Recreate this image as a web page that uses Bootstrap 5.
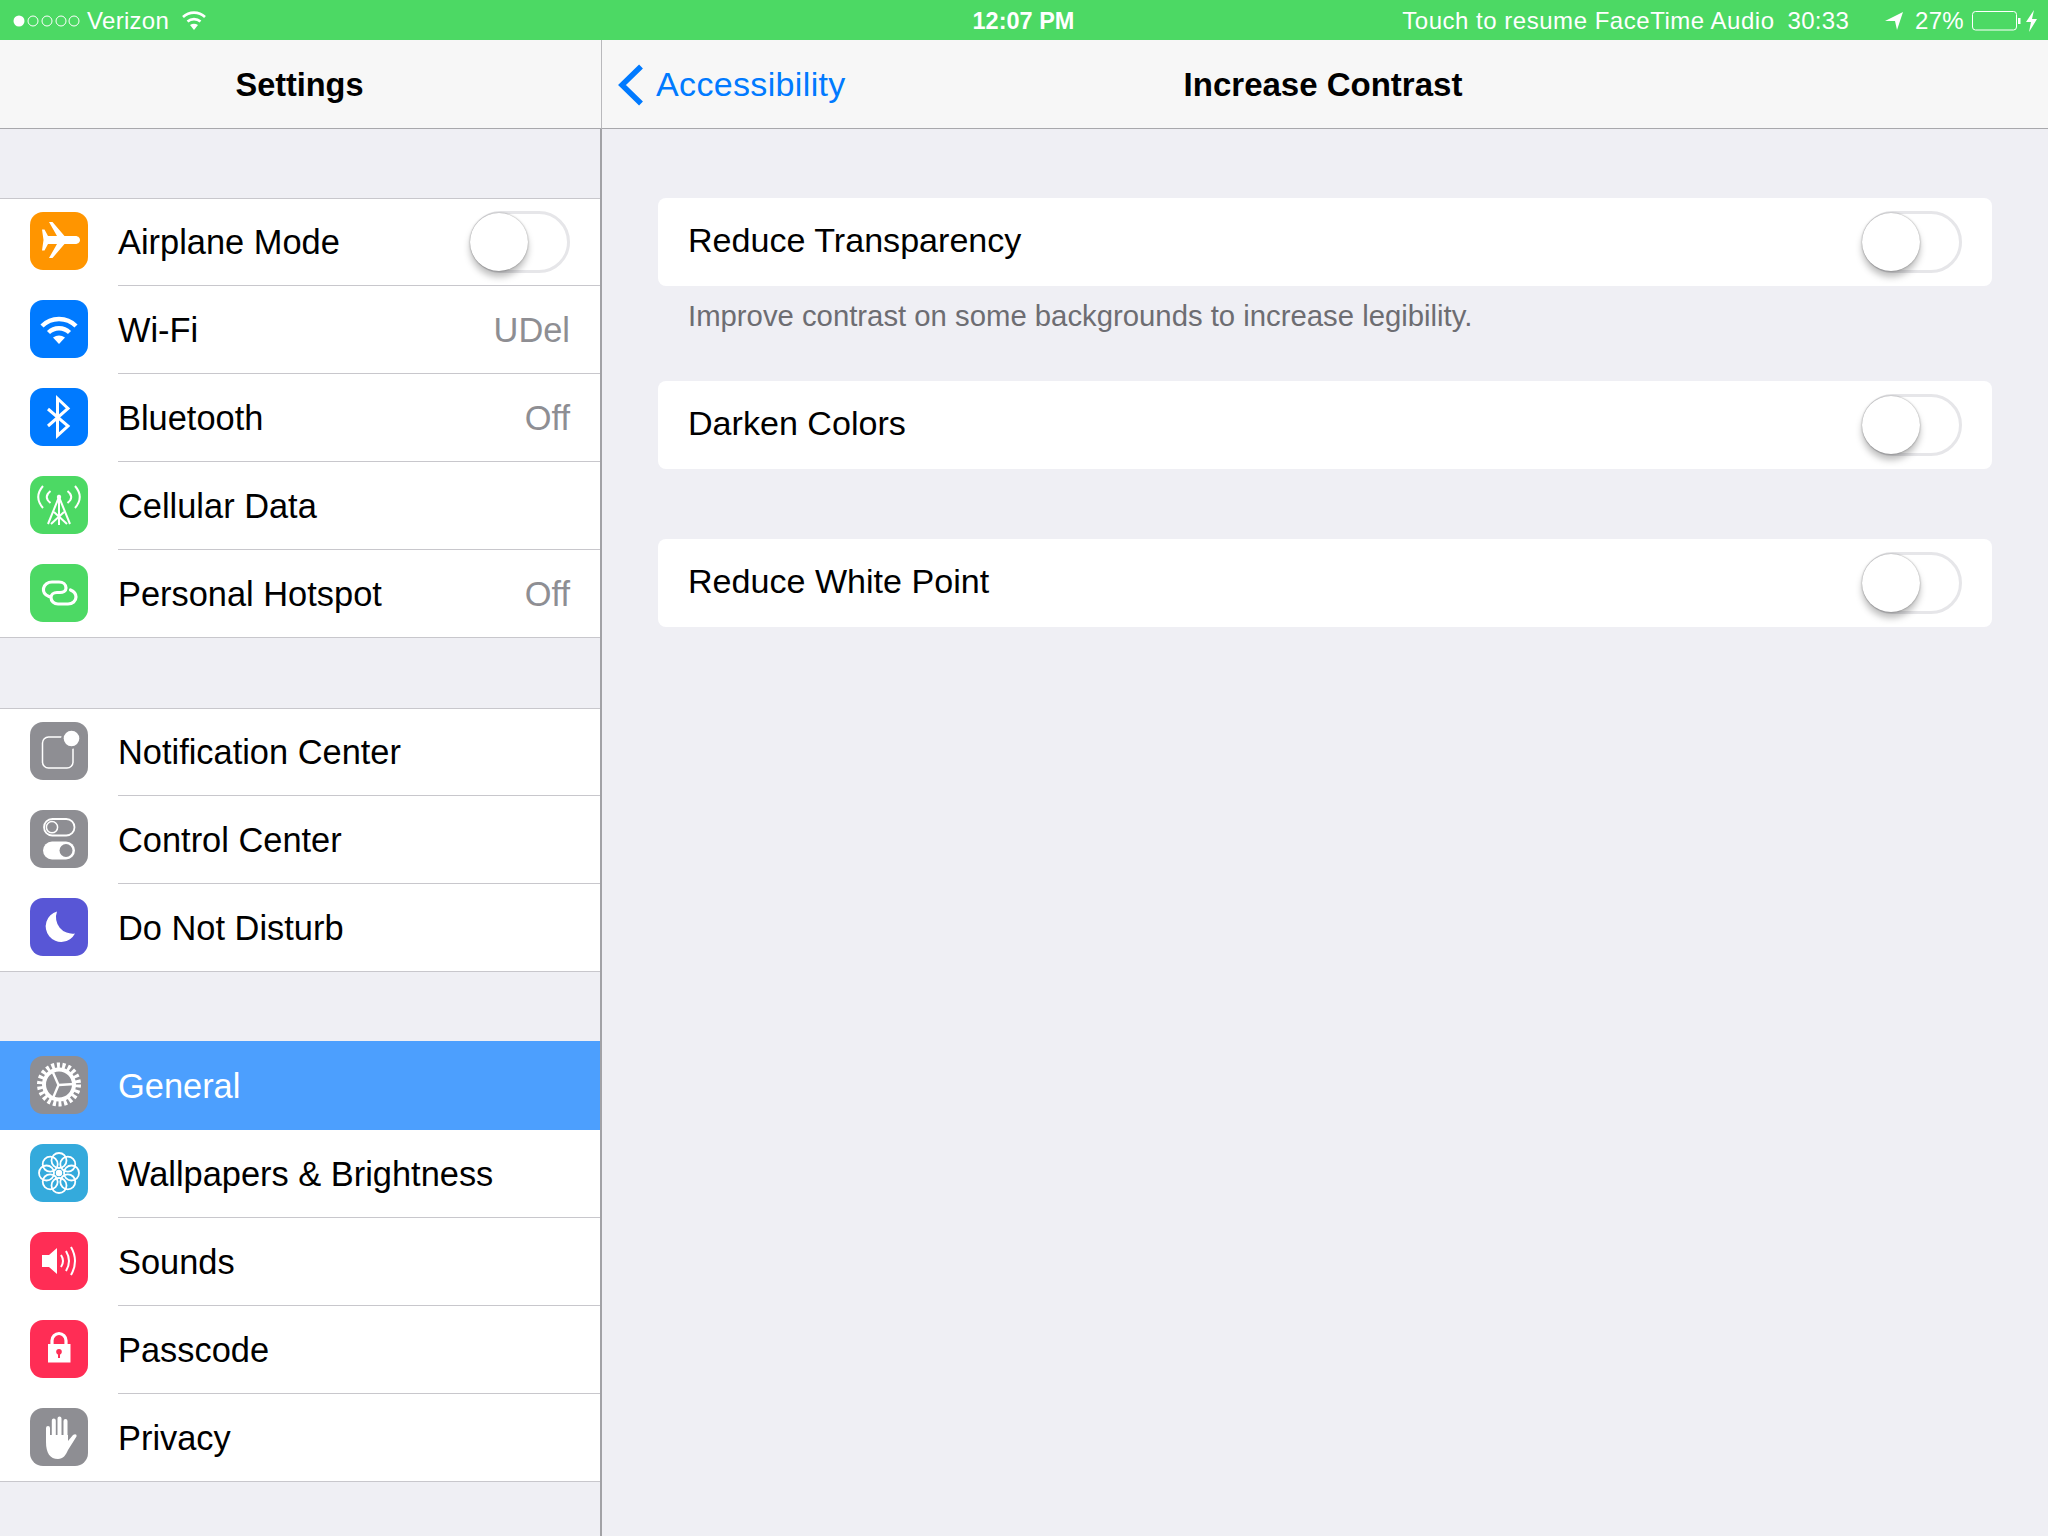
<!DOCTYPE html>
<html lang="en">
<head>
<meta charset="utf-8">
<title>Increase Contrast</title>
<link href="https://cdn.jsdelivr.net/npm/bootstrap@5.3.0/dist/css/bootstrap.min.css" rel="stylesheet">
<style>
html,body{height:1536px;overflow:hidden}
body{background:#efeff4;font-family:"Liberation Sans",Arial,sans-serif;color:#000;--bs-body-font-family:"Liberation Sans",Arial,sans-serif}
.stat-bar{height:40px;background:#4cd964;color:#fff;font-size:24px;display:grid;grid-template-columns:1fr auto 1fr;align-items:center;line-height:40px;letter-spacing:.3px;padding:1px 11px 0 13px}
.stat-time{font-weight:700;font-size:23.5px;letter-spacing:0;margin-left:-3px}
.sig-dots{width:67px;height:12px;margin-right:7px}
.carrier{margin-right:12px}
.stat-wifi{width:26px;height:20px;margin-top:-2px}
.stat-arrow{width:20px;height:20px;margin:0 11px 0 35px}
.stat-batt{width:49px;height:20px;margin-left:8px}
.stat-bolt{width:11px;height:22px;margin-left:5px}
.resume-msg{letter-spacing:.52px}
.timer{margin-left:13px}
.page-split{height:1496px}
.side-pane{width:602px;flex:none;border-right:2px solid #a2a2a6}
.main-pane{flex:1 1 auto;min-width:0}
.top-nav{height:89px;background:#f7f7f7;border-bottom:1px solid #a8a8ac;font-size:34px;line-height:89px;flex:none}
.side-pane .top-nav{margin-right:-2px;border-right:1px solid #b9b9bc;text-align:center;font-weight:700;font-size:32.5px;letter-spacing:-.05px;padding-right:2px;line-height:90px}
.main-nav{display:grid;grid-template-columns:1fr auto 1fr;padding-right:4px}
.nav-head{font-weight:700;font-size:33px}
.back-link{color:#007aff;text-decoration:none;font-size:34px;letter-spacing:.35px;padding-left:15px;display:flex;align-items:center}
.back-chev{width:27px;height:42px;margin-right:12px}
.set-list{border-radius:0;margin-top:69px;border-top:1px solid #c8c7cc;border-bottom:1px solid #c8c7cc;background:#fff;--bs-list-group-bg:#fff;--bs-list-group-border-width:0;--bs-list-group-item-padding-x:0;--bs-list-group-item-padding-y:0}
.set-list+.set-list{margin-top:70px}
.set-list.tight{margin-top:69px;border-top:0}
.set-item{height:88px;padding:0 0 0 30px;font-size:34.4px;color:#000;display:flex;align-items:center;text-decoration:none;background:#fff}
.set-list>.set-item:first-child{height:87px}
.set-list>.set-item:last-child{height:87px}
.set-list.tight>.set-item:first-child{height:89px}
.set-item.is-current{background:#4c9ffe;color:#fff}
.set-ico{width:58px;height:58px;flex:none;margin-right:30px;margin-top:-2px;display:block}
.set-list:not(.tight)>.set-item:first-child .set-ico{margin-top:-3px}
.set-body{flex:1 1 auto;height:100%;display:flex;align-items:center;justify-content:space-between;padding-right:30px;border-bottom:1px solid #c8c7cc;min-width:0}
.set-item:last-child .set-body,.is-current .set-body{border-bottom:0}
.set-label,.set-val{position:relative;top:1px}
.set-val{color:#8e8e93}
.tgl-track{width:100px;height:62px;border:3px solid #e6e6e9;border-radius:31px;background:#fff;flex:none;position:relative;display:block}
.tgl-knob{position:absolute;left:-3px;top:-1px;width:58px;height:58px;border-radius:50%;background:#fff;box-shadow:0 6px 7px rgba(0,0,0,.26),0 0 2px rgba(0,0,0,.4)}
.set-item .tgl-track{margin-top:-1px}
.opt-wrap{padding:69px 56px 0}
.opt-card{height:88px;background:#fff;border-radius:8px;font-size:34.1px;padding:0 30px;display:flex;align-items:center;justify-content:space-between}
.opt-label{position:relative;top:-1px}
.opt-note{color:#6d6d72;font-size:29.3px;line-height:34px;padding:13px 31px 0 30px;height:95px;margin:0}
.opt-gap{margin-top:70px}
</style>
</head>
<body>
<div class="stat-bar">
  <div class="d-flex align-items-center">
    <svg class="sig-dots" viewBox="0 0 67 12"><circle cx="6" cy="6" r="5.5" fill="#fff"/><g fill="none" stroke="#fff" stroke-width="1"><circle cx="20" cy="6" r="5"/><circle cx="34" cy="6" r="5"/><circle cx="48" cy="6" r="5"/><circle cx="61" cy="6" r="5"/></g></svg>
    <span class="carrier">Verizon</span>
    <svg class="stat-wifi" viewBox="0 0 26 20"><g fill="none" stroke="#fff" stroke-width="2.6"><path d="M2 7A16 16 0 0 1 24 7"/><path d="M6.5 11.5A10 10 0 0 1 19.5 11.5"/></g><path d="M9 15Q13 12.5 17 15L13 20Z" fill="#fff"/></svg>
  </div>
  <div class="stat-time">12:07 PM</div>
  <div class="d-flex align-items-center justify-content-end">
    <span class="resume-msg">Touch to resume FaceTime Audio</span><span class="timer">30:33</span>
    <svg class="stat-arrow" viewBox="0 0 20 20"><path d="M1 10L19 1L13 19L11 10Z" fill="#fff"/></svg>
    <span>27%</span>
    <svg class="stat-batt" viewBox="0 0 49 20"><rect x=".5" y=".5" width="44" height="18.5" rx="3" fill="none" stroke="#fff"/><rect x="46" y="7" width="2.5" height="6" fill="#fff"/></svg>
    <svg class="stat-bolt" viewBox="0 0 11 22"><path d="M8 0L0 12H5L3 22L11 9H6Z" fill="#fff"/></svg>
  </div>
</div>
<div class="d-flex page-split">
  <aside class="side-pane d-flex flex-column">
    <div class="top-nav">Settings</div>
    <div class="list-group list-group-flush set-list">
      <a class="list-group-item set-item" href="#">
        <svg class="set-ico" viewBox="0 0 58 58"><rect width="58" height="58" rx="13" fill="#ff9500"/><path d="M12 17.5H14.5L18 24H27L19 10H22.5L34.5 24H45C49 24 50 26.5 50 28S49 32 45 32H34.5L22.5 46H19L27 32H18L14.5 38.5H12L13.5 28Z" fill="#fff"/></svg>
        <div class="set-body"><span class="set-label">Airplane Mode</span><span class="tgl-track"><span class="tgl-knob"></span></span></div>
      </a>
      <a class="list-group-item set-item" href="#">
        <svg class="set-ico" viewBox="0 0 58 58"><rect width="58" height="58" rx="13" fill="#007aff"/><g fill="none" stroke="#fff" stroke-width="4.4"><path d="M12 26A24 24 0 0 1 46 26"/><path d="M18.5 32.5A15 15 0 0 1 39.5 32.5"/></g><path d="M23 37.5Q29 33.5 35 37.5L29 44Z" fill="#fff"/></svg>
        <div class="set-body"><span class="set-label">Wi-Fi</span><span class="set-val">UDel</span></div>
      </a>
      <a class="list-group-item set-item" href="#">
        <svg class="set-ico" viewBox="0 0 58 58"><rect width="58" height="58" rx="13" fill="#007aff"/><path d="M18 21L38 38L27.5 47.5V10.5L38 20.5L18 38" fill="none" stroke="#fff" stroke-width="3"/></svg>
        <div class="set-body"><span class="set-label">Bluetooth</span><span class="set-val">Off</span></div>
      </a>
      <a class="list-group-item set-item" href="#">
        <svg class="set-ico" viewBox="0 0 58 58"><rect width="58" height="58" rx="13" fill="#4cd964"/><g fill="none" stroke="#fff" stroke-width="2"><path d="M13 10Q3.5 21 13 32M20.5 15Q13 21 20.5 27M45 10Q54.5 21 45 32M37.5 15Q45 21 37.5 27"/><path d="M29 21V49M18 48L29 21L40 48M24 36L37 48M34 36L21 48"/></g><circle cx="29" cy="21" r="2.2" fill="#fff"/></svg>
        <div class="set-body"><span class="set-label">Cellular Data</span></div>
      </a>
      <a class="list-group-item set-item" href="#">
        <svg class="set-ico" viewBox="0 0 58 58"><rect width="58" height="58" rx="13" fill="#4cd964"/><path d="M19 32.5C15 31 13 28 13.5 24.5C14 20.5 18 18 22 18H29C33 18 36 20.5 36 24C36 27 33 28.5 30 28.5H27C23.5 28.5 21 30.5 21 33.5C21 37 24 40 28 40H38C42.5 40 46 37 46 33C46 30 44 27.5 40.5 26" fill="none" stroke="#fff" stroke-width="3.2" stroke-linecap="round"/></svg>
        <div class="set-body"><span class="set-label">Personal Hotspot</span><span class="set-val">Off</span></div>
      </a>
    </div>
    <div class="list-group list-group-flush set-list">
      <a class="list-group-item set-item" href="#">
        <svg class="set-ico" viewBox="0 0 58 58"><rect width="58" height="58" rx="13" fill="#8e8e93"/><rect x="12.5" y="15" width="30.5" height="31" rx="6" fill="none" stroke="#fff" stroke-width="1.5"/><circle cx="41.5" cy="16.5" r="10.5" fill="#8e8e93"/><circle cx="41.5" cy="16.5" r="7.8" fill="#fff"/></svg>
        <div class="set-body"><span class="set-label">Notification Center</span></div>
      </a>
      <a class="list-group-item set-item" href="#">
        <svg class="set-ico" viewBox="0 0 58 58"><rect width="58" height="58" rx="13" fill="#8e8e93"/><rect x="14" y="9" width="30.5" height="16.5" rx="8.25" fill="none" stroke="#fff" stroke-width="1.8"/><circle cx="22" cy="17.2" r="5.6" fill="none" stroke="#fff" stroke-width="1.5"/><rect x="13" y="31.5" width="32" height="18" rx="9" fill="#fff"/><circle cx="36" cy="40.5" r="6.5" fill="#8e8e93"/></svg>
        <div class="set-body"><span class="set-label">Control Center</span></div>
      </a>
      <a class="list-group-item set-item" href="#">
        <svg class="set-ico" viewBox="0 0 58 58"><rect width="58" height="58" rx="13" fill="#5856d6"/><path d="M27 13.5A15.5 15.5 0 1 0 45 35.5A16.5 16.5 0 0 1 27 13.5Z" fill="#fff"/></svg>
        <div class="set-body"><span class="set-label">Do Not Disturb</span></div>
      </a>
    </div>
    <div class="list-group list-group-flush set-list tight">
      <a class="list-group-item set-item is-current" href="#">
        <svg class="set-ico" viewBox="0 0 58 58"><rect width="58" height="58" rx="13" fill="#8e8e93"/><g fill="none" stroke="#fff"><circle cx="29" cy="28.5" r="19" stroke-width="6" stroke-dasharray="3 2.43"/><circle cx="29" cy="28.5" r="15" stroke-width="4"/><path d="M28.5 29L45 28M28.5 29L23 16.5M28.5 29L23 42" stroke-width="2.4"/></g></svg>
        <div class="set-body"><span class="set-label">General</span></div>
      </a>
      <a class="list-group-item set-item" href="#">
        <svg class="set-ico" viewBox="0 0 58 58"><rect width="58" height="58" rx="13" fill="#34aadc"/><g fill="none" stroke="#fff" stroke-width="1.8"><circle cx="29" cy="16.5" r="7.5"/><circle cx="37.8" cy="20.2" r="7.5"/><circle cx="41.5" cy="29" r="7.5"/><circle cx="37.8" cy="37.8" r="7.5"/><circle cx="29" cy="41.5" r="7.5"/><circle cx="20.2" cy="37.8" r="7.5"/><circle cx="16.5" cy="29" r="7.5"/><circle cx="20.2" cy="20.2" r="7.5"/></g><circle cx="29" cy="29" r="3.2" fill="#fff"/></svg>
        <div class="set-body"><span class="set-label">Wallpapers &amp; Brightness</span></div>
      </a>
      <a class="list-group-item set-item" href="#">
        <svg class="set-ico" viewBox="0 0 58 58"><rect width="58" height="58" rx="13" fill="#ff2d55"/><path d="M12 23H19L27 16V42L19 35H12Z" fill="#fff"/><g fill="none" stroke="#fff" stroke-width="2"><path d="M31 23Q35 29 31 35M36 19Q42 29 36 39M41 15Q49 29 41 43"/></g></svg>
        <div class="set-body"><span class="set-label">Sounds</span></div>
      </a>
      <a class="list-group-item set-item" href="#">
        <svg class="set-ico" viewBox="0 0 58 58"><rect width="58" height="58" rx="13" fill="#ff2d55"/><path d="M22 25V20.5A7 7 0 0 1 36 20.5V25" fill="none" stroke="#fff" stroke-width="3.2"/><rect x="18" y="24" width="22.5" height="18.5" fill="#fff"/><circle cx="29" cy="31.7" r="2.8" fill="#ff2d55"/><rect x="28" y="32" width="2" height="6" fill="#ff2d55"/></svg>
        <div class="set-body"><span class="set-label">Passcode</span></div>
      </a>
      <a class="list-group-item set-item" href="#">
        <svg class="set-ico" viewBox="0 0 58 58"><rect width="58" height="58" rx="13" fill="#8e8e93"/><g fill="#fff"><path d="M16 34C16 45 20 51 28 51C33 51 36 47 38 42L46.5 28.5C47 26 45 25.5 43 27L38 33V27H16Z"/></g><g fill="none" stroke="#fff" stroke-width="4" stroke-linecap="round"><path d="M18 33V20M23.8 33V12.5M29.5 33V10.5M35.5 33V13"/></g></svg>
        <div class="set-body"><span class="set-label">Privacy</span></div>
      </a>
    </div>
  </aside>
  <main class="main-pane d-flex flex-column">
    <div class="top-nav main-nav">
      <a class="back-link" href="#"><svg class="back-chev" viewBox="0 0 27 42"><path d="M24 2.5L5 21L24 39.5" fill="none" stroke="#007aff" stroke-width="5.5"/></svg>Accessibility</a>
      <div class="nav-head">Increase Contrast</div>
      <div></div>
    </div>
    <div class="opt-wrap">
      <div class="opt-card"><span class="opt-label">Reduce Transparency</span><span class="tgl-track"><span class="tgl-knob"></span></span></div>
      <p class="opt-note">Improve contrast on some backgrounds to increase legibility.</p>
      <div class="opt-card"><span class="opt-label">Darken Colors</span><span class="tgl-track"><span class="tgl-knob"></span></span></div>
      <div class="opt-card opt-gap"><span class="opt-label">Reduce White Point</span><span class="tgl-track"><span class="tgl-knob"></span></span></div>
    </div>
  </main>
</div>
<script src="https://cdn.jsdelivr.net/npm/bootstrap@5.3.0/dist/js/bootstrap.bundle.min.js"></script>
</body>
</html>
